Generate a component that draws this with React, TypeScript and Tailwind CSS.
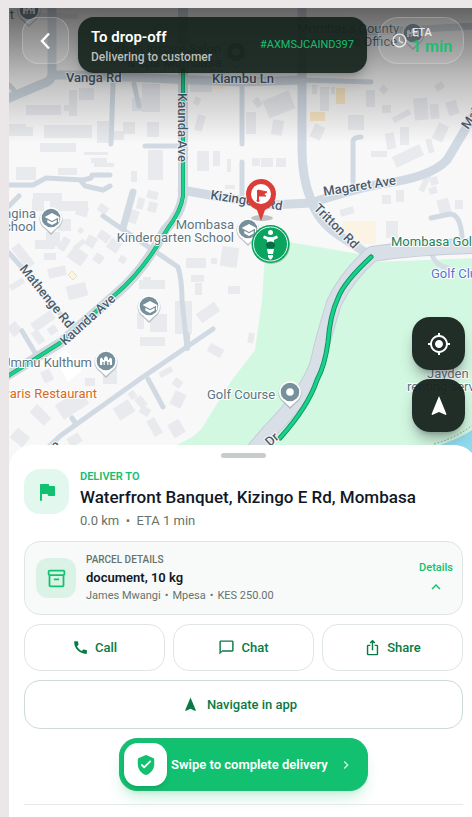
import {
  MdCall,
  MdChatBubbleOutline,
  MdChevronRight,
  MdIosShare,
  MdKeyboardArrowUp,
  MdMyLocation,
  MdNavigation,
  MdOutlineInventory2,
  MdSchedule,
  MdSchool,
} from "react-icons/md";

type Block = [x: number, y: number, w: number, h: number, angle?: number];

const blocks: Block[] = [
  [40, 13, 22, 7],
  [58, 14, 20, 5],
  [150, 20, 18, 26],
  [69, 90, 8, 26],
  [79, 88, 15, 12],
  [26, 105, 35, 10],
  [64, 105, 12, 6],
  [9, 124, 17, 12],
  [18, 127, 15, 9],
  [44, 125, 48, 13],
  [40, 143, 36, 9],
  [97, 121, 12, 22],
  [104, 131, 20, 9],
  [142, 84, 18, 28],
  [132, 98, 10, 13],
  [123, 122, 12, 12],
  [147, 122, 12, 15],
  [190, 84, 22, 8],
  [194, 97, 6, 8, 20],
  [196, 115, 8, 16, 15],
  [16, 167, 20, 13],
  [58, 168, 19, 7],
  [33, 193, 29, 8],
  [32, 199, 12, 12],
  [50, 201, 38, 10],
  [76, 206, 12, 10, 15],
  [84, 152, 24, 3],
  [91, 158, 16, 5],
  [94, 163, 20, 4],
  [98, 205, 10, 8, 35],
  [131, 171, 6, 11],
  [148, 150, 15, 30],
  [147, 191, 11, 8, 15],
  [137, 198, 7, 11, 15],
  [148, 202, 9, 10, 15],
  [128, 210, 10, 13, 20],
  [78, 228, 5, 5, 40],
  [58, 219, 13, 12],
  [46, 232, 14, 14],
  [35, 240, 20, 9],
  [44, 253, 12, 7],
  [60, 237, 8, 14, 30],
  [73, 242, 13, 5, -40],
  [86, 236, 10, 11, 30],
  [98, 232, 12, 9, 35],
  [108, 240, 12, 11, 35],
  [94, 254, 9, 9, 35],
  [119, 256, 7, 7, 30],
  [69, 249, 17, 14, 35],
  [18, 243, 10, 26, -38],
  [48, 267, 18, 10, -12],
  [67, 284, 20, 14, -15],
  [9, 281, 16, 6, -32],
  [139, 280, 26, 9],
  [143, 277, 8, 5],
  [186, 258, 20, 10],
  [211, 258, 6, 6],
  [221, 247, 17, 20, 8],
  [191, 275, 13, 7],
  [195, 283, 7, 12],
  [228, 286, 12, 8],
  [197, 151, 12, 20],
  [213, 151, 7, 15],
  [227, 159, 4, 13],
  [225, 185, 10, 4],
  [312, 85, 5, 9, 0],
  [320, 87, 9, 24],
  [331, 87, 4, 7],
  [366, 90, 9, 17],
  [382, 105, 9, 8],
  [380, 86, 7, 7, 45],
  [265, 95, 28, 19, -22],
  [254, 98, 7, 9, -40],
  [246, 112, 10, 22],
  [272, 120, 11, 15, 10],
  [312, 125, 11, 14, 25],
  [348, 115, 16, 15],
  [414, 98, 14, 22, -5],
  [430, 104, 9, 15, -5],
  [447, 101, 11, 14, -18],
  [435, 83, 9, 7, -35],
  [392, 113, 19, 6, -28],
  [400, 127, 9, 18],
  [386, 133, 9, 16, -10],
  [427, 139, 6, 14, -15],
  [435, 124, 11, 17, 25],
  [252, 158, 8, 8],
  [261, 158, 12, 9],
  [276, 158, 10, 9],
  [393, 150, 30, 12, -25],
  [371, 151, 16, 6],
  [382, 195, 9, 9],
  [396, 190, 8, 12],
  [386, 221, 12, 17],
  [422, 174, 6, 18, 25],
  [430, 177, 8, 8, -15],
  [429, 187, 8, 7, -15],
  [438, 199, 12, 15, -15],
  [455, 200, 8, 9],
  [340, 208, 14, 7, -15],
  [31, 316, 24, 10, -35],
  [34, 330, 8, 14, -35],
  [48, 326, 9, 8, -35],
  [9, 323, 11, 12, -40],
  [137, 313, 7, 16],
  [150, 314, 17, 18],
  [140, 337, 25, 9],
  [175, 301, 17, 33],
  [197, 307, 22, 11, -35],
  [208, 346, 15, 9, 30],
  [42, 370, 10, 12, -25],
  [85, 378, 10, 8],
  [103, 365, 14, 19],
  [35, 405, 11, 20, -45],
  [57, 396, 30, 17, -33],
  [115, 403, 18, 14, -33],
  [129, 391, 7, 8, -35],
  [135, 398, 12, 8, 50],
  [140, 407, 10, 8, 30],
  [159, 369, 14, 6, -30],
  [173, 379, 9, 8, 35],
  [172, 392, 12, 15, 25],
  [150, 418, 9, 18, -30],
  [170, 421, 13, 15, -30],
  [68, 435, 13, 10, -30],
  [12, 431, 16, 13, 40],
  [248, 333, 6, 10, 10],
];

const golfDrive = "M478 246Q420 247 372 254Q346 277 334 303Q322 342 318 362Q310 390 270 431L252 452";
const kaundaRoute = "M183 66V196Q181 211 168 228Q145 269 116 294L60 343L5 378";
const driveRoute = "M371 257Q344 282 338 298Q330 315 328 342Q325 365 317 380Q308 407 280 438";

const parcelFacts = ["James Mwangi", "Mpesa", "KES 250.00"];

const contactActions = [
  { label: "Call", icon: MdCall },
  { label: "Chat", icon: MdChatBubbleOutline },
  { label: "Share", icon: MdIosShare },
];

function PoiPin({ x, y, kind }: { x: number; y: number; kind: "school" | "civic" | "dot" }) {
  return (
    <g transform={`translate(${x} ${y})`}>
      <path d="M0 16 L-6 10 A11.5 11.5 0 1 1 6 10 Z" fill="#8b979d" opacity="0.55" transform="translate(0 1)" />
      <path d="M0 15 L-6 9.5 A11 11 0 1 1 6 9.5 Z" fill="#fff" />
      <circle r="9.3" fill="#78909c" />
      {kind === "school" && <MdSchool x={-7} y={-7} width={14} height={14} color="#fff" />}
      {kind === "civic" && (
        <path d="M-6 4V-2L-4.500 -3.500L-3 -2V-1H-2V-3L0 -5L2 -3V-1H3V-2L4.500 -3.500L6 -2V4H3.800V1H2.400V4H1.200V1Q0 -1 -1.200 1V4H-2.400V1H-3.800V4Z" fill="#fff" />
      )}
      {kind === "dot" && <circle r="3.8" fill="#fff" />}
    </g>
  );
}

function RouteMap() {
  return (
    <svg
      className="absolute inset-0 h-full w-full font-[Roboto,sans-serif]"
      viewBox="9 8 469 461"
      preserveAspectRatio="xMinYMin slice"
      aria-label="Route map"
    >
      <rect x="9" y="8" width="469" height="461" fill="#f8f8f9" />
      <g fill="#e9eaee">
        {blocks.map(([x, y, w, h, angle = 0], i) => (
          <rect key={i} x={x} y={y} width={w} height={h} transform={`rotate(${angle} ${x + w / 2} ${y + h / 2})`} />
        ))}
      </g>
      <g fill="#fbf3e3">
        <rect x="342" y="221" width="34" height="23" />
        <rect x="336" y="88" width="9" height="16" fill="#f9e7c5" />
        <rect x="310" y="112" width="15" height="9" fill="#f9e7c5" />
        <rect x="212" y="84" width="14" height="5" />
        <path d="M68 275l4-4 5 5-4 4z" stroke="#eadfbd" />
      </g>

      <path d="M266 238L365 255L374 262L478 258V469H160L178 444Q200 436 208 418L232 380L255 350L262 300Z" fill="#d3f8e2" />
      <path d="M478 425Q466 437 437 446V469H478Z" fill="#90daee" />
      <path d="M478 420Q462 436 434 444" fill="none" stroke="#7f9c92" strokeDasharray="1.5 2" />

      <g fill="none" stroke="#d1dae3" strokeLinecap="round" strokeLinejoin="round">
        <g strokeWidth="9">
          <path d="M52 0V76Q50 82 42 84L9 98" />
          <path d="M52 75H80L240 82" />
          <path d="M302 0V150Q302 178 311 200" />
          <path d="M182 190L215 196L270 205L311 203Q350 190 380 184Q430 178 447 160L478 108" />
          <path d="M311 200Q318 222 340 236L368 254" />
          <path d="M240 82L302 80" />
          <path d="M330 34L478 26" strokeWidth="7" />
        </g>
        <g strokeWidth="5">
          <path d="M9 85L14 90" />
          <path d="M113 84L111 144" />
          <path d="M134 84L139 106" />
          <path d="M242 84V144" />
          <path d="M302 80L371 82" />
          <path d="M145 146H180" />
          <path d="M353 182V142Q353 137 361 137" />
          <path d="M242 162V194" />
          <path d="M9 185L33 185L46 178L83 180L91 178L92 175H110" />
          <path d="M81 181L85 186L103 190L110 186" />
          <path d="M9 206L19 196" />
          <path d="M103 216L125 231L178 267Q182 280 182 300L187 348" />
          <path d="M133 192L123 228" strokeWidth="7" />
          <path d="M9 253L25 271L76 333" />
          <path d="M22 331L37 356" />
          <path d="M213 329L140 379L60 436L40 455" />
          <path d="M148 379L163 407" />
          <path d="M187 335V348" strokeWidth="6" />
          <path d="M72 418L76 424" />
          <path d="M431 218L450 214Q460 214 462 236" />
          <path d="M432 255Q436 266 448 268" stroke="#d5dee6" />
        </g>
      </g>

      <g fill="none" strokeLinejoin="round">
        <path d={golfDrive} stroke="#c5cdd8" strokeWidth="16" />
        <path d={golfDrive} stroke="#d9dfe6" strokeWidth="14" />
        <path d="M183 0V196Q181 214 165 230Q143 272 116 294L60 343L0 380" stroke="#cfd8df" strokeWidth="10" />
        <g strokeLinecap="round">
          <path d={kaundaRoute} stroke="#119463" strokeWidth="4" />
          <path d={kaundaRoute} stroke="#18d18b" strokeWidth="3" />
          <path d={driveRoute} stroke="#119463" strokeWidth="5" />
          <path d={driveRoute} stroke="#18d18b" strokeWidth="3" />
          <path d="M271 205H274" stroke="#18c984" strokeWidth="5" />
        </g>
      </g>

      <path d="M54 356L66 350L82 370L68 382Z" fill="#fff" />

      <g fontSize="13" fontWeight="500" fill="#4a5c70" stroke="#f8f8f9" strokeWidth="2" paintOrder="stroke" strokeLinejoin="round">
        <text x="66" y="82">Vanga Rd</text>
        <text x="212" y="83">Kiambu Ln</text>
        <text transform="translate(178 93) rotate(90)">Kaunda Ave</text>
        <text transform="translate(210 199) rotate(9)">Kizingo E Rd</text>
        <text transform="translate(324 196) rotate(-9)">Magaret Ave</text>
        <text transform="translate(313 209) rotate(45)">Tritton Rd</text>
        <text transform="translate(19 269) rotate(51)">Mathenge Rd</text>
        <text transform="translate(65 346) rotate(-42)">Kaunda Ave</text>
        <text transform="translate(468 130) rotate(-55)">Makupa</text>
        <text transform="translate(52 453) rotate(-38)" textAnchor="middle">Ave</text>
        <text transform="translate(270 447) rotate(-42)">Dr</text>
      </g>

      <g fontSize="13" fill="#5c7582" stroke="#fff" strokeWidth="2" paintOrder="stroke" strokeLinejoin="round">
        <text x="14" y="19" textAnchor="end">Point</text>
        <text x="165" y="53" textAnchor="middle">Urban Inspire Salon</text>
        <text x="174" y="67" textAnchor="middle">& Spa Mombasa</text>
        <text x="348" y="33" textAnchor="middle">Mombasa County</text>
        <text x="348" y="46" textAnchor="middle">Governor's Office</text>
        <text x="36" y="218" textAnchor="end">Wangina</text>
        <text x="36" y="231" textAnchor="end">School</text>
        <text x="234" y="229" textAnchor="end">Mombasa</text>
        <text x="234" y="242" textAnchor="end">Kindergarten School</text>
        <text x="92" y="367" textAnchor="end">Ummu Kulthum</text>
        <text x="207" y="399">Golf Course</text>
        <text x="427" y="378">Jayden</text>
        <text x="407" y="391">renting services</text>
        <text x="97" y="398" textAnchor="end" fill="#d56a1b">Stavaris Restaurant</text>
        <text x="391" y="246" fill="#26805a">Mombasa Golf Club</text>
        <text x="431" y="278" fill="#5276cf">Golf Club</text>
      </g>

      <PoiPin x={29} y={10} kind="civic" />
      <PoiPin x={236} y={52} kind="dot" />
      <PoiPin x={413} y={33} kind="civic" />
      <PoiPin x={51} y={218} kind="school" />
      <PoiPin x={149} y={306} kind="school" />
      <PoiPin x={106} y={361} kind="civic" />
      <PoiPin x={248} y={229} kind="school" />
      <PoiPin x={290} y={392} kind="dot" />

      {/* drop-off pin */}
      <ellipse cx="262" cy="218" rx="11" ry="3" fill="#6b6f72" opacity="0.4" />
      <path d="M261 221L257 210Q246 205 246 194A15 15 0 0 1 276 194Q276 205 265 210Z" fill="#db3d38" />
      <circle cx="261" cy="194" r="10" fill="#fff" />
      <path d="M258 190L267 192L263.500 194L266 196L258 196Z" fill="#db3d38" stroke="#db3d38" strokeLinejoin="round" />
      <path d="M258 190V200" stroke="#db3d38" strokeWidth="2" />
      <circle cx="258" cy="200.500" r="1.500" fill="#db3d38" />

      {/* rider, seen from above */}
      <circle cx="271" cy="245" r="19" fill="#7d9488" opacity="0.5" />
      <circle cx="270.500" cy="244" r="19" fill="#0aa45f" />
      <circle cx="270.500" cy="244" r="17" fill="none" stroke="#eafbf2" />
      <g fill="#fff">
        <circle cx="270.500" cy="232.500" r="2.500" />
        <path d="M264 235.500L268 237H273L277 235.500L278 238L274 240V246H267V240L263 238Z" />
        <path d="M267 249H274L273 254H268Z" />
        <path d="M268 255H273V257L271 259.500H270L268 257Z" />
      </g>
      <ellipse cx="270.500" cy="245" rx="4.500" ry="3.500" fill="#0c6b44" />
    </svg>
  );
}

function TripHeader() {
  return (
    <header className="relative flex items-start bg-linear-to-b from-black/60 via-black/25 to-transparent pt-[9px] pr-[14px] pb-[70px] pl-[13px]">
      <button
        aria-label="Back"
        className="flex size-[47px] shrink-0 items-center justify-center rounded-2xl border border-white/20 bg-white/10 text-white"
      >
        <svg viewBox="0 0 20 20" className="size-5" fill="none" stroke="currentColor" strokeWidth="2.400">
          <path d="M13 2.500L6 10L13 17.500" />
        </svg>
      </button>
      <div className="ml-[9px] flex h-14 min-w-0 flex-1 items-center justify-between rounded-2xl bg-[#17231d]/93 px-[13px] shadow-lg shadow-black/20">
        <div className="pt-1">
          <h1 className="text-[15px] leading-5 font-semibold text-white">To drop-off</h1>
          <p className="text-xs leading-5 font-medium text-[#b9bfbc]">Delivering to customer</p>
        </div>
        <span className="text-[11px] text-[#17c070]">#AXMSJCAIND397</span>
      </div>
      <div className="ml-[11px] flex h-[47px] w-[86px] shrink-0 items-center gap-1 rounded-[20px] border border-white/20 bg-white/10 pl-3">
        <MdSchedule className="size-[17px] shrink-0 text-white/80" />
        <div>
          <p className="text-[11px] leading-3 font-medium text-white/80">ETA</p>
          <p className="text-base leading-4 font-semibold text-[#17c070]">1 min</p>
        </div>
      </div>
    </header>
  );
}

function DeliverySheet() {
  return (
    <section className="relative -mt-6 flex-1 rounded-t-3xl bg-white px-[15px] pt-2">
      <div className="mx-auto h-[5px] w-[45px] rounded-full bg-[#c8cdca]" />

      <div className="mt-[11px] flex gap-[11px]">
        <div className="flex size-[45px] shrink-0 items-center justify-center rounded-2xl bg-[#e2f7ed] text-[#12c170]">
          <svg viewBox="0 0 24 24" className="size-6" fill="currentColor">
            <path d="M14.400 6l-.240-1.200c-.090-.460-.500-.800-.980-.800H6c-.550 0-1 .450-1 1v15c0 .550.450 1 1 1s1-.450 1-1v-6h5.600l.240 1.200c.090.470.500.800.980.800H19c.550 0 1-.450 1-1V7c0-.550-.450-1-1-1z" />
          </svg>
        </div>
        <div>
          <p className="text-[11px] leading-4 font-semibold text-[#12c170]">DELIVER TO</p>
          <h2 className="text-[17px] leading-6 font-medium text-[#101828]">
            Waterfront Banquet, Kizingo E Rd, Mombasa
          </h2>
          <p className="text-[13px] leading-6 text-[#66736c]">0.0 km&nbsp; •&nbsp; ETA 1 min</p>
        </div>
      </div>

      <div className="mt-2 flex h-[74px] items-center rounded-2xl border border-[#dfe6e2] bg-[#f8faf9] pr-[9px] pl-[11px]">
        <div className="flex size-10 shrink-0 items-center justify-center rounded-xl bg-[#dbf3e7] text-[#12c170]">
          <MdOutlineInventory2 className="size-[21px]" />
        </div>
        <div className="ml-2.5 flex-1">
          <p className="text-[10px] leading-4 font-medium text-[#66736c]">PARCEL DETAILS</p>
          <p className="text-[13px] leading-5 font-semibold text-[#101828]">document, 10 kg</p>
          <ul className="flex text-[11px] leading-4 text-[#66736c]">
            {parcelFacts.map((fact, i) => (
              <li key={fact}>
                {i > 0 && <span className="px-1">•</span>}
                {fact}
              </li>
            ))}
          </ul>
        </div>
        <button className="flex flex-col items-center gap-0.5 text-[11px] leading-4 font-medium text-[#12c170]">
          Details
          <MdKeyboardArrowUp className="size-[18px]" />
        </button>
      </div>

      <div className="mt-[9px] grid grid-cols-3 gap-2 text-[13px] font-medium text-[#087a45]">
        {contactActions.map(({ label, icon: Icon }) => (
          <button key={label} className="flex h-[47px] items-center justify-center gap-1.5 rounded-2xl border border-[#dfe6e2]">
            <Icon className="size-[17px]" />
            {label}
          </button>
        ))}
      </div>

      <button className="mt-[9px] flex h-[49px] w-full items-center justify-center gap-2 rounded-2xl border border-[#cfdad4] pr-2 text-[13px] font-medium text-[#087a45]">
        <MdNavigation className="size-[17px]" />
        Navigate in app
      </button>

      <button className="mx-auto mt-[9px] flex h-[53px] w-[249px] items-center rounded-[18px] border border-[#25b874] bg-[#12c170] pl-1 text-[13px] font-semibold text-white shadow-lg shadow-[#12c170]/20">
        <span className="flex size-[43px] items-center justify-center rounded-[14px] bg-white text-[#12c170] shadow-md shadow-black/10">
          <svg viewBox="0 0 24 24" className="size-[22px]" fill="currentColor">
            <path d="M11.190 1.360l-7 3.110C3.470 4.790 3 5.510 3 6.300V11c0 5.550 3.840 10.740 9 12 5.160-1.260 9-6.450 9-12V6.300c0-.790-.470-1.510-1.190-1.830l-7-3.110c-.510-.230-1.110-.230-1.620 0zM9.300 15.300l-2.590-2.590a1 1 0 0 1 1.410-1.410L10 13.170l5.880-5.880a1 1 0 0 1 1.410 1.410l-6.590 6.600c-.380.380-1.010.380-1.400 0z" />
          </svg>
        </span>
        <span className="ml-1">Swipe to complete delivery</span>
        <MdChevronRight className="ml-2.5 size-4 text-white/80" />
      </button>

      <hr className="mt-[13px] border-[#e4e8e6]" />
    </section>
  );
}

export default function App() {
  return (
    <div className="min-h-screen overflow-hidden bg-[#ebe6e7] pt-2 pl-[9px] font-[Roboto,sans-serif]">
      <main className="-mr-1.5 flex min-h-[calc(100vh-8px)] flex-col bg-white">
        <div className="relative h-[461px] overflow-hidden">
          <RouteMap />
          <TripHeader />
          <div className="absolute right-[13px] bottom-[37px] flex flex-col gap-[9px]">
            <button
              aria-label="Centre on my location"
              className="flex size-[53px] items-center justify-center rounded-[18px] bg-[#17231d]/95 text-white shadow-lg shadow-black/30"
            >
              <MdMyLocation className="size-6" />
            </button>
            <button
              aria-label="Face north"
              className="flex size-[53px] items-center justify-center rounded-[18px] bg-[#17231d]/95 text-white shadow-lg shadow-black/30"
            >
              <MdNavigation className="size-6" />
            </button>
          </div>
        </div>
        <DeliverySheet />
      </main>
    </div>
  );
}
